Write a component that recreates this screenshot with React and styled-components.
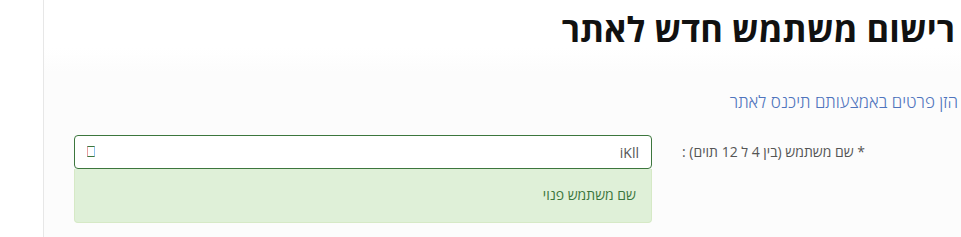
import styled, { createGlobalStyle } from 'styled-components';

const GlobalStyle = createGlobalStyle`
  html, body {
    margin: 0;
    padding: 0;
    background: #ffffff;
  }
  body {
    font-family: "Open Sans", "DejaVu Sans", sans-serif;
  }
`;

export default function App() {
  return (
    <>
      <GlobalStyle />
      <Page>
        <Sidebar />
        <Main>
          <Title>רישום משתמש חדש לאתר</Title>
          <Content>
            <Lead>הזן פרטים באמצעותם תיכנס לאתר</Lead>
            <FormRow>
              <Label htmlFor="username">* שם משתמש (בין 4 ל 12 תוים) :</Label>
              <Field>
                <InputWrap>
                  <Input id="username" defaultValue="iKll" />
                  <FeedbackIcon />
                </InputWrap>
                <Alert>שם משתמש פנוי</Alert>
              </Field>
            </FormRow>
          </Content>
        </Main>
      </Page>
    </>
  );
}

const Page = styled.div`
  display: flex;
  height: 237px;
  overflow: hidden;
`;

const Sidebar = styled.div`
  width: 43px;
  flex: none;
  background: #ffffff;
  border-right: 1px solid #e7e7e7;
`;

const Main = styled.div`
  flex: 1;
  direction: rtl;
  background: linear-gradient(to bottom, #ffffff 0, #ffffff 48px, #fcfcfc 72px, #fcfcfc 100%);
  display: flex;
  flex-direction: column;
`;

const Title = styled.h1`
  margin: 0;
  padding: 6px 6px 0 0;
  height: 56px;
  box-sizing: border-box;
  font-size: 34.5px;
  font-weight: 700;
  color: #111;
  line-height: 46px;
`;

const Content = styled.div`
  flex: 1;
  padding: 34px 3px 0 30px;
`;

const Lead = styled.p`
  margin: 0;
  font-size: 17px;
  font-weight: 300;
  color: #4f74bd;
  line-height: 24px;
`;

const FormRow = styled.div`
  display: flex;
  margin-top: 21px;
  align-items: flex-start;
`;

const Label = styled.label`
  width: 306px;
  flex: none;
  padding-right: 93px;
  box-sizing: border-box;
  font-size: 14px;
  color: #555;
  line-height: 34px;
`;

const Field = styled.div`
  flex: 1;
`;

const InputWrap = styled.div`
  position: relative;
`;

const Input = styled.input`
  display: block;
  width: 100%;
  height: 34px;
  box-sizing: border-box;
  padding: 6px 12px;
  border: 1px solid #3c763d;
  border-radius: 4px;
  background: #ffffff;
  font-family: inherit;
  font-size: 14px;
  color: #555;
  direction: rtl;
  outline: none;
`;

const FeedbackIcon = styled.span`
  position: absolute;
  left: 13px;
  top: 11px;
  width: 6px;
  height: 9px;
  border: 1px solid #3c763d;
  border-left-color: #e8a0a0;
  border-right-color: #8fc3ef;
`;

const Alert = styled.div`
  height: 54px;
  box-sizing: border-box;
  padding: 0 15px;
  background: #dff0d8;
  border: 1px solid #d6e9c6;
  border-top: none;
  border-radius: 0 0 4px 4px;
  color: #3c763d;
  font-size: 14px;
  line-height: 52px;
`;
